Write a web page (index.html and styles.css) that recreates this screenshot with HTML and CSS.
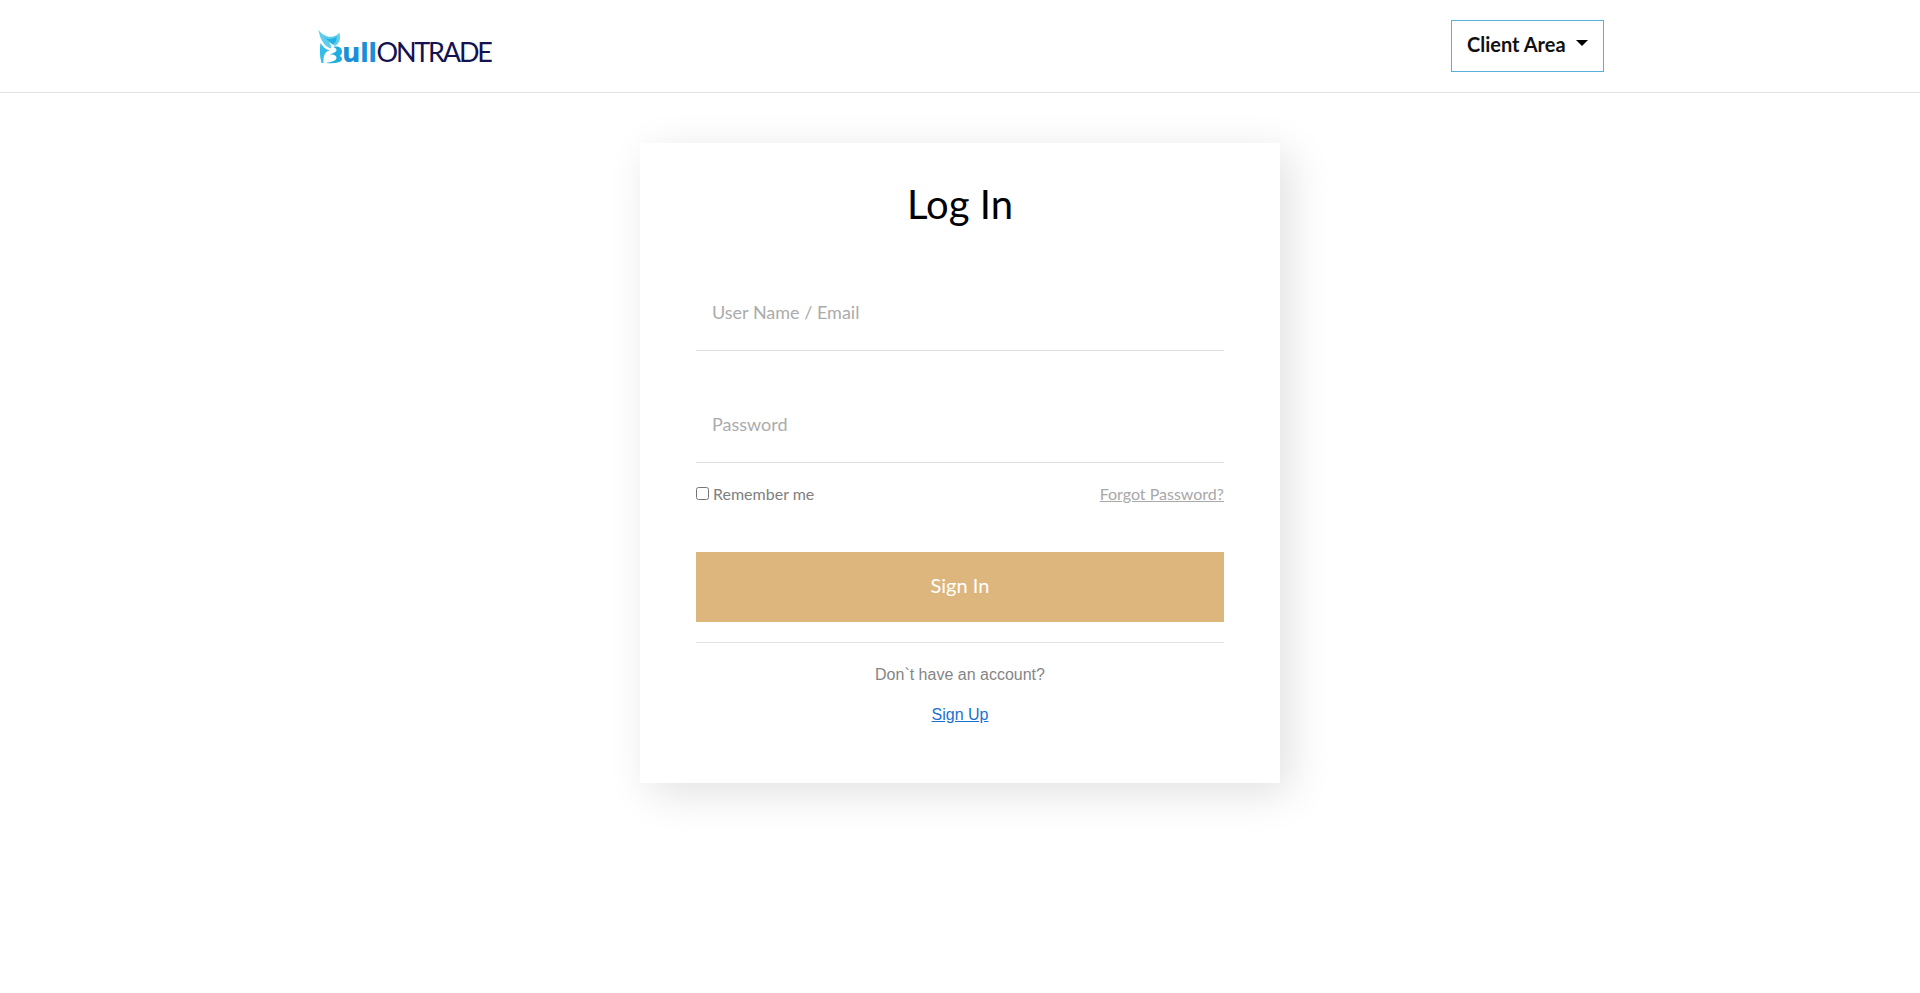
FILE: index.html
```html
<!DOCTYPE html>
<html lang="en">
<head>
<meta charset="utf-8">
<title>Log In</title>
<link rel="stylesheet" href="styles.css">
</head>
<body>
<header class="topbar">
  <div class="topbar-inner">
    <a class="logo" href="#">
      <svg class="logo-mark" width="24" height="36" viewBox="318 28 24 36" aria-hidden="true">
        <path d="M318 29.5 C320 32.5 322.5 34.5 326.5 36 C330 37.5 334 37 337.5 34.5 L339.5 32.5 L340 37.5 C340 41.5 338 44 335 46 C333 44 331 43 329 42.5 C331 44.5 331.5 46.5 331 48.5 C327.5 47.5 324.5 45 322.5 41.5 C321.5 39 319.5 37 319.5 34 Z" fill="#5fcdec"/>
        <path d="M323.5 37 C327 39.5 331 39.5 336.5 37 C337 40.5 335 43.5 332.5 44.5 C330 41.5 327 40 323.5 37 Z" fill="#24b1e3"/>
        <path d="M320.5 43 C323 47 326 49.5 329.5 50.5 C325.5 51.5 323 55 323.5 63 L321.5 63 C319.5 56 319.5 49 320.5 43 Z" fill="#35bce8"/>
        <path d="M333 47 C338 45.5 342 47.5 342 51.5 C342 53.5 341 55 339.5 56 C342 57 342.5 59 341.5 60.5 C339.5 63 334 63.5 326 63 C331 62 336 61 336.5 58 C336.8 55.5 334 54 330 54.5 C333 53 336.5 52 336.5 50 C336.5 48.5 335 47.5 333 47 Z" fill="#1eaee2"/>
      </svg>
      <span class="logo-text"><span class="logo-bold">ull</span><span class="logo-light">ONTRADE</span></span>
    </a>
    <button class="client-btn" type="button">Client Area<span class="caret"></span></button>
  </div>
</header>
<main class="page">
  <section class="card">
    <h1 class="title">Log In</h1>
    <form class="form">
      <div class="field"><input class="input" type="text" placeholder="User Name / Email"></div>
      <div class="field"><input class="input" type="password" placeholder="Password"></div>
      <div class="options">
        <label class="remember"><input class="check" type="checkbox">Remember me</label>
        <a class="forgot" href="#">Forgot Password?</a>
      </div>
      <button class="submit" type="button">Sign In</button>
    </form>
    <div class="signup">
      <p class="signup-text">Don`t have an account?</p>
      <a class="signup-link" href="#">Sign Up</a>
    </div>
  </section>
</main>
</body>
</html>
```
FILE: styles.css
```css
* { box-sizing: border-box; }
html, body { margin: 0; padding: 0; background: #fff; }
body { font-family: "Lato", "Liberation Sans", sans-serif; color: #000; height: 993px; overflow: hidden; }

.topbar { height: 93px; border-bottom: 1px solid #e3e3e3; }
.topbar-inner { width: 1320px; height: 92px; margin: 0 auto; padding: 20px 16px 0 18px; display: flex; justify-content: space-between; align-items: flex-start; }

.logo { display: flex; align-items: flex-end; height: 44px; text-decoration: none; }
.logo-mark { flex: none; }
.logo-text { display: block; line-height: 16px; white-space: nowrap; }
.logo-bold { font-family: "DejaVu Sans", sans-serif; font-weight: 700; font-size: 26px; color: #1a8fd8; letter-spacing: -0.6px; }
.logo-light { font-weight: 400; font-size: 27px; color: #14124f; letter-spacing: -2.2px; }

.client-btn { width: 153px; height: 52px; padding: 0 15px 5px; background: #fff; border: 1px solid #5aaedb; font: 700 20px "Lato", sans-serif; color: #111; display: flex; align-items: center; white-space: nowrap; }
.caret { margin-left: 10px; width: 0; height: 0; border-left: 6px solid transparent; border-right: 6px solid transparent; border-top: 6px solid #000; margin-top: -1px; }

.page { display: flex; justify-content: center; padding-top: 50px; }
.card { width: 640px; height: 640px; padding: 35px 56px 0; background: #fff; box-shadow: 10px 10px 40px rgba(0,0,0,.12); }
.title { margin: 0; text-align: center; font-weight: 400; font-size: 40px; line-height: 52px; }

.form { margin-top: 9px; }
.field { height: 112px; border-bottom: 1px solid #dcdcdc; display: flex; align-items: flex-end; }
.input { width: 100%; height: 60px; padding: 0 16px; margin-bottom: 8px; border: 0; outline: 0; font: 400 18px "Lato", sans-serif; color: #333; background: transparent; }
.input::placeholder { color: #ababab; opacity: 1; }

.options { display: flex; justify-content: space-between; align-items: center; margin-top: 18px; height: 24px; font-size: 16px; }
.remember { display: flex; align-items: center; color: #808080; }
.check { width: 13px; height: 13px; margin: 0 4px 0 0; }
.forgot { color: #a8a8a8; }

.submit { display: block; width: 100%; height: 70px; margin-top: 47px; padding: 0 0 5px; border: 0; background: #dcb67c; color: #fff; font: 400 20px "Lato", sans-serif; }

.signup { margin-top: 20px; padding-top: 20px; border-top: 1px solid #e3e3e3; text-align: center; font-family: "Liberation Sans", Arial, sans-serif; font-size: 16px; line-height: 24px; }
.signup-text { margin: 0; color: #858585; }
.signup-link { display: inline-block; margin-top: 16px; color: #1a70d2; }
```
